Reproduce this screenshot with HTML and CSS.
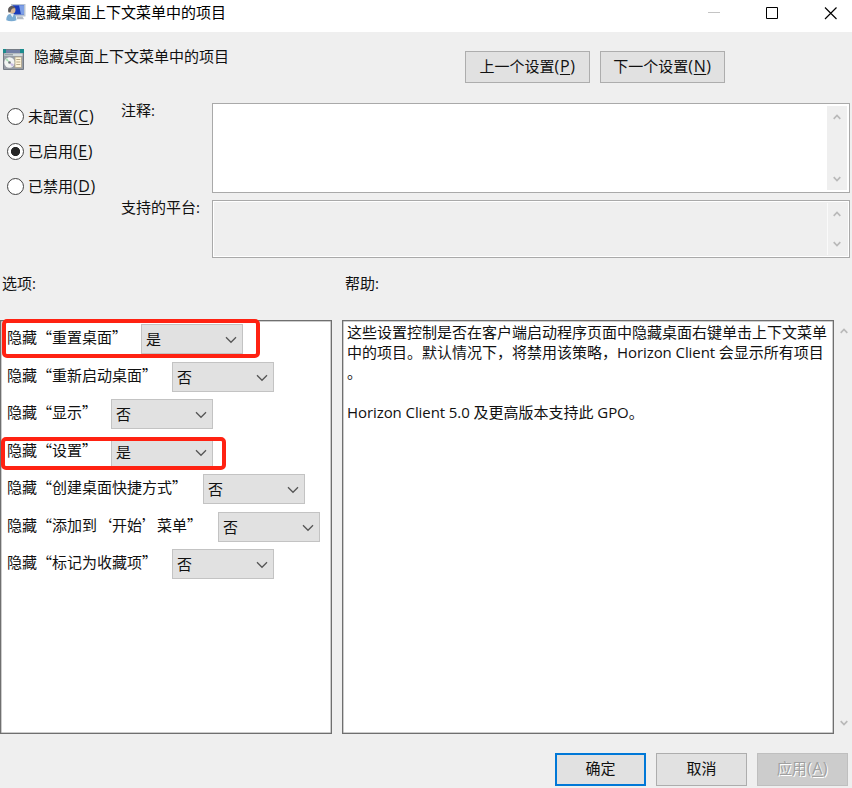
FILE: index.html
```html
<!DOCTYPE html>
<html lang="zh-CN">
<head>
<meta charset="utf-8">
<title>隐藏桌面上下文菜单中的项目</title>
<link rel="stylesheet" href="styles.css">
</head>
<body>
<svg class="defs" width="0" height="0">
  <symbol id="up" viewBox="0 0 8 6"><path d="M.7 4.8 4 1.5l3.3 3.3" fill="none" stroke="currentColor" stroke-width="1.7"/></symbol>
  <symbol id="down" viewBox="0 0 8 6"><path d="M.7 1.2 4 4.5l3.3-3.3" fill="none" stroke="currentColor" stroke-width="1.7"/></symbol>
  <symbol id="chev" viewBox="0 0 12 8"><path d="M1 1.3 6 6.3l5-5" fill="none" stroke="currentColor" stroke-width="1.3"/></symbol>
</svg>
<div class="window">
  <header class="titlebar">
    <svg class="title-icon" width="20" height="19" viewBox="0 0 20 19">
      <path d="M5 1h14.500v12.500H5z" fill="#b9c4d2"/>
      <path d="M6.500 2.300H18v9.200H6.500z" fill="#1a3cba"/>
      <path d="M13 2.300h5v9.200h-3z" fill="#7d9fe6"/>
      <path d="M11 13.500h5.500l1.500 2.700h-7z" fill="#b3bbc4"/>
      <path d="M.3 17.200c0-4.500 2-6.500 5.200-6.500 3.500 0 5 2.400 5 6.500-3 1.500-7 1.500-10.200 0z" fill="#7aabd2"/>
      <path d="M4 10.500h4l-1.500 4z" fill="#e6eef5"/>
      <circle cx="6" cy="7" r="3.500" fill="#d9b896"/>
      <path d="M2.500 9.500C1.200 5 3.500 2.800 6 2.900c2 0 3 1.200 3.300 2.400-3-.6-4.300.4-4.700 3.800z" fill="#5d5a5c"/>
    </svg>
    <h1 class="title">隐藏桌面上下文菜单中的项目</h1>
    <div class="controls">
      <svg width="13" height="13" viewBox="0 0 13 13"><path d="M0 5.500h12" stroke="#c4c4c4"/></svg>
      <svg width="13" height="13" viewBox="0 0 13 13"><path d="M.5.5h11v11H.5z" fill="none" stroke="#000"/></svg>
      <svg width="13" height="13" viewBox="0 0 13 13"><path d="m1 .5 11.500 11.500m0-11.500L1 12" stroke="#000" stroke-width="1.150"/></svg>
    </div>
  </header>

  <section class="policy">
    <svg class="policy-icon" width="21" height="21" viewBox="0 0 21 21">
      <path d="M.5.500h20v20H.5z" fill="#989da6" stroke="#747b84"/>
      <path d="M1 1h19v3H1z" fill="#7480a6"/>
      <path d="M0 0h3v4H0zM17 0h4v4h-4z" fill="#1b8b8d"/>
      <path d="M1.500 4.500h18v2.500h-18z" fill="#d4dadd"/>
      <path d="M2 5.800h8" stroke="#7f8992"/>
      <circle cx="6.500" cy="13.500" r="5.200" fill="#f2f4f2"/>
      <path d="m6.500 13.500-4-2.500 1.500-2z" fill="#a8dcb4"/>
      <path d="m6.500 13.500 4.500 1.700-2 2.500z" fill="#c9bce2"/>
      <circle cx="6.500" cy="13.500" r="1.300" fill="#6c7478"/>
      <path d="M12 8h6.500v10.500H12z" fill="#fdf3d8" stroke="#b0a58c" stroke-width=".8"/>
      <path d="M13.300 10.500h4M13.300 13h4M13.300 15.500h4" stroke="#b8a888"/>
    </svg>
    <h2 class="policy-name">隐藏桌面上下文菜单中的项目</h2>
    <button class="btn nav">上一个设置<span class="key">(<u>P</u>)</span></button>
    <button class="btn nav">下一个设置<span class="key">(<u>N</u>)</span></button>
  </section>

  <section class="state">
    <div class="radios">
      <label class="radio"><i class="dot"></i>未配置<span class="key">(<u>C</u>)</span></label>
      <label class="radio"><i class="dot on"></i>已启用<span class="key">(<u>E</u>)</span></label>
      <label class="radio"><i class="dot"></i>已禁用<span class="key">(<u>D</u>)</span></label>
    </div>
    <div class="labels">
      <span>注释<span class="latin">:</span></span>
      <span>支持的平台<span class="latin">:</span></span>
    </div>
    <div class="fields">
      <div class="area comment"><div class="scroll"><svg><use href="#up"/></svg><svg><use href="#down"/></svg></div></div>
      <div class="area platforms"><div class="scroll"><svg><use href="#up"/></svg><svg><use href="#down"/></svg></div></div>
    </div>
  </section>

  <section class="heads">
    <span>选项<span class="latin">:</span></span>
    <span>帮助<span class="latin">:</span></span>
  </section>

  <main class="panels">
    <div class="options">
      <div class="row"><span>隐藏“重置桌面”</span><div class="select">是<svg><use href="#chev"/></svg></div><i class="mark mark-reset"></i></div>
      <div class="row long"><span>隐藏“重新启动桌面”</span><div class="select">否<svg><use href="#chev"/></svg></div></div>
      <div class="row"><span>隐藏“显示”</span><div class="select">否<svg><use href="#chev"/></svg></div></div>
      <div class="row"><span>隐藏“设置”</span><div class="select">是<svg><use href="#chev"/></svg></div><i class="mark mark-settings"></i></div>
      <div class="row longer"><span>隐藏“创建桌面快捷方式”</span><div class="select">否<svg><use href="#chev"/></svg></div></div>
      <div class="row longer"><span>隐藏“添加到‘开始’菜单”</span><div class="select">否<svg><use href="#chev"/></svg></div></div>
      <div class="row long"><span>隐藏“标记为收藏项”</span><div class="select">否<svg><use href="#chev"/></svg></div></div>
    </div>
    <div class="help">
      <p>这些设置控制是否在客户端启动程序页面中隐藏桌面右键单击上下文菜单<br>中的项目。默认情况下，将禁用该策略，<span class="latin">Horizon Client </span>会显示所有项目<br>。</p>
      <p><span class="latin">Horizon Client 5.0 </span>及更高版本支持此<span class="latin"> GPO</span>。</p>
    </div>
    <div class="scroll outer"><svg><use href="#up"/></svg><svg><use href="#down"/></svg></div>
  </main>

  <footer class="footer">
    <button class="btn primary">确定</button>
    <button class="btn">取消</button>
    <button class="btn off" disabled>应用<span class="key">(<u>A</u>)</span></button>
  </footer>
</div>
</body>
</html>
```

FILE: styles.css
```css
* { box-sizing: border-box; }

body {
  margin: 0;
  background: #efefef;
  color: #111;
  font: 15px/20px "Noto Sans CJK SC", sans-serif;
}

h1, h2, p { margin: 0; font-size: 15px; font-weight: 400; }
svg { display: block; flex: none; }
.defs { position: absolute; }
.key, .latin { font-family: "Open Sans", "Noto Sans CJK SC", sans-serif; white-space: pre; }
.key { font-size: 16px; letter-spacing: 0.6px; }
.latin { letter-spacing: -0.08px; }
u { text-underline-offset: 2px; text-decoration-thickness: 1px; }

.window {
  width: 852px;
  height: 788px;
  overflow: hidden;
  display: flex;
  flex-direction: column;
}

.titlebar {
  height: 32px;
  flex: none;
  padding: 3px 15px 0 6px;
  background: #fff;
  display: flex;
  align-items: flex-start;
}
.title { margin: -1px 0 0 5px; color: #000; }
.controls { margin: 4px 0 0 auto; display: flex; gap: 45px; }

.policy {
  height: 71px;
  flex: none;
  padding: 18px 0 0 3px;
  display: flex;
  align-items: flex-start;
}
.policy-icon { margin-top: -1px; }
.policy-name { margin: -4px auto 0 10px; }

.btn {
  width: 91px;
  height: 33px;
  padding: 0 0 3px;
  border: 1px solid #adadad;
  background: #e1e1e1;
  color: #111;
  font: inherit;
}
.nav { width: 125px; height: 32px; margin: 1px 10px 0 0; padding-bottom: 2px; }
.nav:last-child { margin-right: 127px; }

.state {
  height: 155px;
  flex: none;
  display: grid;
  grid-template-columns: 121px 91px 638px;
}
.radios { padding: 3px 0 0 7px; display: flex; flex-direction: column; gap: 15px; }
.radio { display: flex; align-items: center; height: 20px; }
.dot {
  width: 17px;
  height: 17px;
  margin-right: 4px;
  border: 1.5px solid #444;
  border-radius: 50%;
  background: #fff;
}
.dot.on { background: radial-gradient(circle, #262626 4.2px, #fff 5px); }
.labels { display: flex; flex-direction: column; gap: 77px; margin-top: -3px; }
.fields { display: flex; flex-direction: column; gap: 7px; }
.area {
  display: flex;
  justify-content: flex-end;
  border: 1px solid #a9a9a9;
  padding: 2px;
  background: #fff;
}
.comment { height: 90px; }
.platforms { height: 58px; background: #efefef; box-shadow: inset 0 0 0 1px #fff; }
.scroll {
  width: 20px;
  padding: 8px 1px 8px 0;
  background: #efefef;
  color: #b9b9b9;
  display: flex;
  flex-direction: column;
  align-items: center;
  justify-content: space-between;
}
.scroll svg { width: 8px; height: 6px; }
.platforms .scroll { border-left: 1px solid #fafafa; padding-right: 2px; }

.heads {
  height: 62px;
  flex: none;
  padding: 15px 0 0 2px;
  display: grid;
  grid-template-columns: 343px 1fr;
}

.panels {
  height: 414px;
  flex: none;
  display: grid;
  grid-template-columns: 332px 491px 19px;
}
.options {
  border: 1px solid #6f6f6f;
  box-shadow: inset 0 0 0 0.5px #999;
  background: #fff;
  padding: 3px 0 0 6px;
  display: flex;
  flex-direction: column;
  gap: 7.5px;
}
.row { position: relative; height: 30px; display: flex; gap: 14px; }
.row.long { gap: 15px; }
.row.longer { gap: 16px; }
.row > span { margin-top: 3px; }
.select {
  width: 102px;
  height: 30px;
  padding: 0 5px 0 4px;
  border: 1px solid #c3c3c3;
  background: #e1e1e1;
  display: flex;
  align-items: center;
  justify-content: space-between;
}
.select svg { width: 12px; height: 8px; margin-top: 2px; color: #555; }
.mark { position: absolute; border: 4px solid #ff2212; border-radius: 5px; }
.mark-reset { left: -5px; top: -5px; width: 258px; height: 39px; }
.mark-settings { left: -6px; top: 0; width: 225px; height: 33.5px; }

.help {
  margin-left: 10px;
  width: 492px;
  border: 1px solid #6f6f6f;
  box-shadow: inset 0 0 0 0.5px #999;
  background: #fff;
  padding: 1px 0 0 4px;
  white-space: nowrap;
}
.help p + p { margin-top: 20px; }
.outer { margin-left: 11px; padding: 8px 0; background: none; }

.footer {
  flex: 1;
  padding: 19px 4px 0 0;
  display: flex;
  justify-content: flex-end;
  gap: 10px;
}
.primary { border: 2px solid #0078d7; }
.off { background: #ccc; border-color: #bfbfbf; color: #a0a0a0; text-shadow: 1px 1px #fff; }
```
